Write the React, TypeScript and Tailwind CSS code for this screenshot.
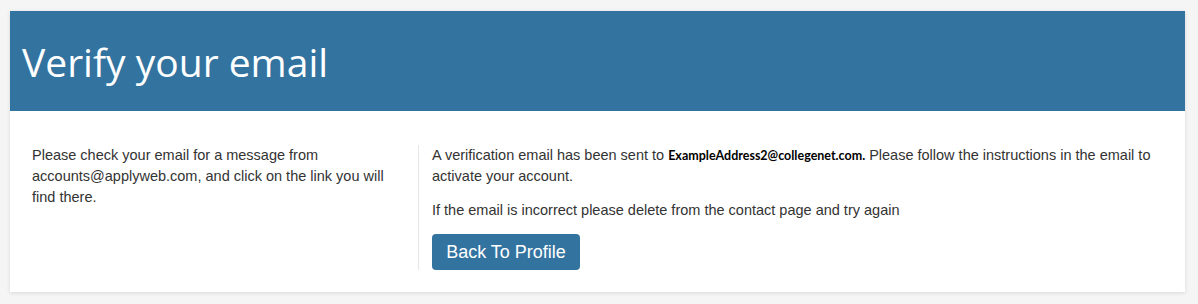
export default function App() {
  return (
    <div className="min-h-[304px] w-full bg-[#f5f5f5] pt-[11px] pl-[10px]">
      <div className="w-[1175px] bg-white shadow-[0_1px_4px_rgba(0,0,0,0.12)]">
        {/* Header */}
        <div className="flex h-[100px] items-center bg-[#33739f] pl-[12px]">
          <h1 className="font-['Open_Sans',sans-serif] text-[39px] font-normal leading-none text-white">
            Verify your email
          </h1>
        </div>

        {/* Body */}
        <div className="flex pt-[34px] pb-[22px] font-['Liberation_Sans',Arial,sans-serif] text-[14.5px] leading-[21px] text-[#333]">
          <div className="w-[408px] shrink-0 pl-[22px] pr-[18px]">
            <p>
              Please check your email for a message from accounts@applyweb.com, and click on the link you will find
              there.
            </p>
          </div>
          <div className="flex-1 border-l border-[#e6e6e6] pl-[13px] pr-[20px]">
            <p>
              A verification email has been sent to{" "}
              <span className="font-['Lato',sans-serif] text-[12.5px] font-bold text-black">
                ExampleAddress2@collegenet.com.
              </span>{" "}
              Please follow the instructions in the email to activate your account.
            </p>
            <p className="mt-[13px]">If the email is incorrect please delete from the contact page and try again</p>
            <button className="mt-[13px] h-[36px] w-[148px] rounded-[4px] bg-[#33739f] text-[18px] leading-none text-white">
              Back To Profile
            </button>
          </div>
        </div>
      </div>
    </div>
  );
}
